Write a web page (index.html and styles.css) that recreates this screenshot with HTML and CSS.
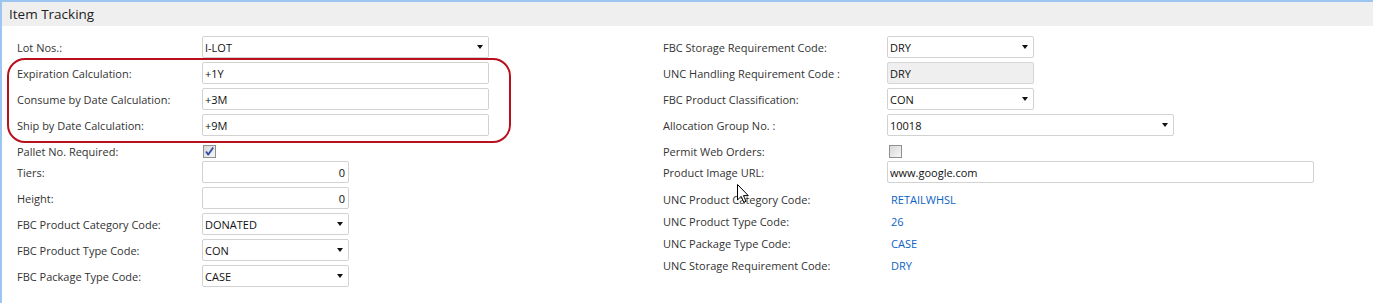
FILE: index.html
```html
<!DOCTYPE html>
<html>
<head>
<meta charset="utf-8">
<link rel="stylesheet" href="styles.css">
</head>
<body>
<div class="panel">
  <div class="header">Item Tracking</div>
  <div class="body">
    <div class="col col-left">
      <div class="row"><span class="label">Lot Nos.:</span><div class="field wide drop">I-LOT</div></div>
      <div class="row"><span class="label">Expiration Calculation:</span><div class="field wide">+1Y</div></div>
      <div class="row"><span class="label">Consume by Date Calculation:</span><div class="field wide">+3M</div></div>
      <div class="row"><span class="label">Ship by Date Calculation:</span><div class="field wide">+9M</div></div>
      <div class="row check"><span class="label">Pallet No. Required:</span><span class="box checked"><svg viewBox="0 0 11 11" width="11" height="11"><path d="M2 5.5 L4.3 8.6 L9.2 1.6" fill="none" stroke="#2d4fa8" stroke-width="1.8" stroke-linejoin="round"/></svg></span></div>
      <div class="row"><span class="label">Tiers:</span><div class="field num">0</div></div>
      <div class="row"><span class="label">Height:</span><div class="field num">0</div></div>
      <div class="row"><span class="label">FBC Product Category Code:</span><div class="field drop">DONATED</div></div>
      <div class="row"><span class="label">FBC Product Type Code:</span><div class="field drop">CON</div></div>
      <div class="row"><span class="label">FBC Package Type Code:</span><div class="field drop">CASE</div></div>
    </div>
    <div class="col col-right">
      <div class="row"><span class="label">FBC Storage Requirement Code:</span><div class="field drop">DRY</div></div>
      <div class="row"><span class="label">UNC Handling Requirement Code :</span><div class="field readonly">DRY</div></div>
      <div class="row"><span class="label">FBC Product Classification:</span><div class="field drop">CON</div></div>
      <div class="row"><span class="label">Allocation Group No. :</span><div class="field mid drop">10018</div></div>
      <div class="row check"><span class="label">Permit Web Orders:</span><span class="box"></span></div>
      <div class="row"><span class="label">Product Image URL:</span><div class="field long">www.google.com</div></div>
      <div class="row static first"><span class="label">UNC Product Category Code:</span><span class="value">RETAILWHSL</span></div>
      <div class="row static"><span class="label">UNC Product Type Code:</span><span class="value">26</span></div>
      <div class="row static"><span class="label">UNC Package Type Code:</span><span class="value">CASE</span></div>
      <div class="row static"><span class="label">UNC Storage Requirement Code:</span><span class="value">DRY</span></div>
    </div>
  </div>
  <div class="highlight"></div>
  <svg class="cursor" viewBox="0 0 12 19" width="12" height="19"><path d="M0.5 0.5 L0.5 16 L4.2 12.4 L6.8 18.3 L9 17.3 L6.5 11.6 L11.3 11.6 Z" fill="#fff" stroke="#000" stroke-width="1" stroke-linejoin="miter"/></svg>
</div>
</body>
</html>
```
FILE: styles.css
```css
html, body {
  margin: 0;
  padding: 0;
  background: #fff;
}
.panel {
  position: relative;
  height: 303px;
  border-left: 2px solid #9cc5f0;
  font-family: "Open Sans", "Noto Sans", sans-serif;
  font-size: 11px;
  color: #333;
  overflow: hidden;
}
.header {
  height: 24px;
  line-height: 24px;
  border-top: 2px solid #9cc5f2;
  background: #efefef;
  padding-left: 7px;
  font-size: 13.5px;
  color: #1e1e1e;
}
.body {
  display: flex;
  padding: 8px 0 0 15px;
}
.col-left {
  width: 646px;
}
.col-right {
  flex: 1;
}
.row {
  height: 26px;
  display: flex;
  align-items: center;
}
.row.check {
  height: 21px;
  box-sizing: border-box;
  padding-top: 5px;
}
.row.static {
  height: 22px;
}
.row.static.first {
  margin-top: 3px;
}
.col-left .label {
  width: 185px;
  flex: none;
}
.col-right .label {
  width: 224px;
  flex: none;
}
.field {
  position: relative;
  box-sizing: border-box;
  height: 22px;
  width: 147px;
  border: 1px solid #d2d2d2;
  border-radius: 2px;
  padding: 0 3px 0 2px;
  display: flex;
  align-items: center;
  color: #111;
  background: #fff;
}
.field.wide { width: 287px; }
.field.mid { width: 287px; }
.field.long { width: 427px; }
.field.num { justify-content: flex-end; }
.field.readonly {
  background: #efefef;
  border-color: #d6d6d6;
}
.field.drop::after {
  content: "";
  position: absolute;
  right: 5px;
  top: 8px;
  border-left: 3.5px solid transparent;
  border-right: 3.5px solid transparent;
  border-top: 4px solid #111;
}
.box {
  box-sizing: border-box;
  width: 13px;
  height: 13px;
  margin-left: 1px;
  border: 1px solid #8f9090;
  background: linear-gradient(135deg, #d8d8d8, #f6f6f6);
  display: flex;
  align-items: center;
  justify-content: center;
}
.col-right .box { margin-left: 2px; }
.value {
  margin-left: 4px;
  color: #0b63c5;
}
.highlight {
  position: absolute;
  left: 5px;
  top: 58px;
  width: 504px;
  height: 85px;
  box-sizing: border-box;
  border: 2px solid #b8101c;
  border-radius: 18px;
}
.cursor {
  position: absolute;
  left: 735px;
  top: 184px;
}
```
